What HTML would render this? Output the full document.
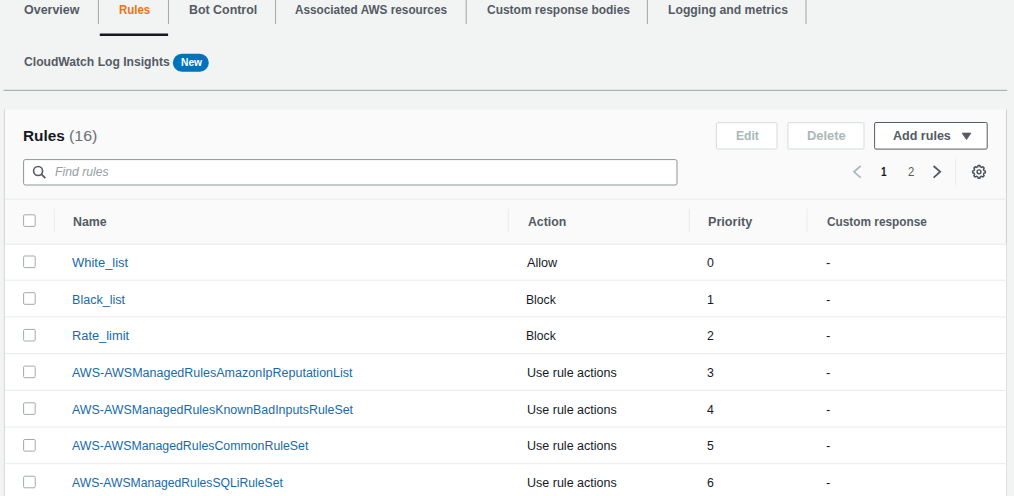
<!DOCTYPE html>
<html>
<head>
<meta charset="utf-8">
<title>Rules</title>
<style>
html,body{margin:0;padding:0;}
body{width:1014px;height:496px;overflow:hidden;background:#f2f3f3;font-family:"Liberation Sans",sans-serif;color:#16191f;position:relative;}
.t{position:absolute;white-space:nowrap;line-height:20px;height:20px;transform-origin:0 50%;}
</style>
</head>
<body>
<svg id="shapes" width="1014" height="496" viewBox="0 0 1014 496" style="position:absolute;left:0;top:0;">
<rect x="97.85" y="0" width="1.1" height="23.9" fill="#a6adad"/>
<rect x="167.95" y="0" width="1.1" height="23.9" fill="#a6adad"/>
<rect x="274.95" y="0" width="1.1" height="23.9" fill="#a6adad"/>
<rect x="465.65" y="0" width="1.1" height="23.9" fill="#a6adad"/>
<rect x="646.85" y="0" width="1.1" height="23.9" fill="#a6adad"/>
<rect x="805.45" y="0" width="1.1" height="23.9" fill="#a6adad"/>
<rect x="99.8" y="33.5" width="68.3" height="2.5" fill="#16191f"/>
<rect x="172.8" y="53.75" width="36" height="18" rx="9" fill="#0073bb"/>
<rect x="3.6" y="89.8" width="1003.6" height="1.1" fill="#a6adad"/>
<rect x="4.4" y="109.5" width="1002.4" height="400" fill="#fafafa"/>
<rect x="3.9" y="109.5" width="1" height="400" fill="#d0d4d4"/>
<rect x="1005.9" y="109.5" width="1.1" height="400" fill="#d0d4d4"/>
<rect x="4.9" y="244.5" width="1001.4" height="260" fill="#ffffff"/>
<rect x="4.9" y="198.75" width="1001.4" height="1" fill="#e9ecec"/>
<rect x="4.9" y="243.70" width="1001.4" height="1" fill="#e9ecec"/>
<rect x="4.9" y="279.70" width="1001.4" height="1" fill="#e9ecec"/>
<rect x="4.9" y="316.40" width="1001.4" height="1" fill="#e9ecec"/>
<rect x="4.9" y="353.10" width="1001.4" height="1" fill="#e9ecec"/>
<rect x="4.9" y="389.80" width="1001.4" height="1" fill="#e9ecec"/>
<rect x="4.9" y="426.50" width="1001.4" height="1" fill="#e9ecec"/>
<rect x="4.9" y="463.20" width="1001.4" height="1" fill="#e9ecec"/>
<rect x="53.75" y="208.75" width="1" height="23.25" fill="#e9ecec"/>
<rect x="507.75" y="208.75" width="1" height="23.25" fill="#e9ecec"/>
<rect x="688.75" y="208.75" width="1" height="23.25" fill="#e9ecec"/>
<rect x="806.50" y="208.75" width="1" height="23.25" fill="#e9ecec"/>
<rect x="23.6" y="214.80" width="11.6" height="11.6" rx="1.2" fill="#fff" stroke="#a3abab" stroke-width="1"/>
<rect x="23.6" y="256.00" width="11.6" height="11.6" rx="1.2" fill="#fff" stroke="#a3abab" stroke-width="1"/>
<rect x="23.6" y="292.70" width="11.6" height="11.6" rx="1.2" fill="#fff" stroke="#a3abab" stroke-width="1"/>
<rect x="23.6" y="329.40" width="11.6" height="11.6" rx="1.2" fill="#fff" stroke="#a3abab" stroke-width="1"/>
<rect x="23.6" y="366.10" width="11.6" height="11.6" rx="1.2" fill="#fff" stroke="#a3abab" stroke-width="1"/>
<rect x="23.6" y="402.80" width="11.6" height="11.6" rx="1.2" fill="#fff" stroke="#a3abab" stroke-width="1"/>
<rect x="23.6" y="439.50" width="11.6" height="11.6" rx="1.2" fill="#fff" stroke="#a3abab" stroke-width="1"/>
<rect x="23.6" y="476.20" width="11.6" height="11.6" rx="1.2" fill="#fff" stroke="#a3abab" stroke-width="1"/>
<rect x="716.4" y="122.7" width="60.6" height="26.3" rx="1.2" fill="#fff" stroke="#d5dbdb"/>
<rect x="787.9" y="122.7" width="76.1" height="26.3" rx="1.2" fill="#fff" stroke="#d5dbdb"/>
<rect x="874.6" y="122.5" width="112.6" height="26.6" rx="1.4" fill="#fff" stroke="#545b64"/>
<path d="M962.1 133.1 L970.9 133.1 L966.5 139.6 Z" fill="#545b64" stroke="#545b64" stroke-width="0.8" stroke-linejoin="round"/>
<rect x="23.6" y="159.6" width="653.4" height="25.4" rx="1.8" fill="#fff" stroke="#8a9697"/>
<circle cx="38.1" cy="170.95" r="4.5" fill="none" stroke="#545b64" stroke-width="1.6"/>
<path d="M41.3 174.2 L45.3 178.1" stroke="#545b64" stroke-width="1.8" stroke-linecap="butt"/>
<path d="M860.6 166 L854 171.8 L860.6 177.6" fill="none" stroke="#aab7b8" stroke-width="1.7"/>
<path d="M933.6 166 L940.2 171.8 L933.6 177.6" fill="none" stroke="#545b64" stroke-width="1.8"/>
<rect x="955.1" y="159" width="1" height="26" fill="#e8ebeb"/>
<path d="M977.79 166.79 L978.05 165.52 L979.95 165.52 L980.21 166.79 L981.72 167.42 L982.81 166.71 L984.14 168.04 L983.43 169.13 L984.06 170.64 L985.33 170.90 L985.33 172.80 L984.06 173.06 L983.43 174.57 L984.14 175.66 L982.81 176.99 L981.72 176.28 L980.21 176.91 L979.95 178.18 L978.05 178.18 L977.79 176.91 L976.28 176.28 L975.19 176.99 L973.86 175.66 L974.57 174.57 L973.94 173.06 L972.67 172.80 L972.67 170.90 L973.94 170.64 L974.57 169.13 L973.86 168.04 L975.19 166.71 L976.28 167.42 Z" fill="none" stroke="#4a5059" stroke-width="1.45" stroke-linejoin="round"/>
<circle cx="979.0" cy="171.85" r="1.95" fill="none" stroke="#4a5059" stroke-width="1.4"/>
</svg>

<!-- texts -->
<div class="t" id="tab1" style="left:24.25px;top:0px;font-size:12.5px;font-weight:bold;font-style:normal;color:#545b64;transform:scaleX(0.9979);">Overview</div>
<div class="t" id="tab2" style="left:118.75px;top:0px;font-size:12.5px;font-weight:bold;font-style:normal;color:#ec7211;transform:scaleX(0.9168);">Rules</div>
<div class="t" id="tab3" style="left:188.75px;top:0px;font-size:12.5px;font-weight:bold;font-style:normal;color:#545b64;transform:scaleX(0.9925);">Bot Control</div>
<div class="t" id="tab4" style="left:295.25px;top:0px;font-size:12.5px;font-weight:bold;font-style:normal;color:#545b64;transform:scaleX(0.9418);">Associated AWS resources</div>
<div class="t" id="tab5" style="left:486.50px;top:0px;font-size:12.5px;font-weight:bold;font-style:normal;color:#545b64;transform:scaleX(0.9573);">Custom response bodies</div>
<div class="t" id="tab6" style="left:668.00px;top:0px;font-size:12.5px;font-weight:bold;font-style:normal;color:#545b64;transform:scaleX(0.9758);">Logging and metrics</div>
<div class="t" id="tab7" style="left:23.75px;top:52px;font-size:12.5px;font-weight:bold;font-style:normal;color:#545b64;transform:scaleX(0.9700);">CloudWatch Log Insights</div>
<div class="t" id="new" style="left:180.60px;top:52px;font-size:11px;font-weight:bold;font-style:normal;color:#ffffff;transform:scaleX(0.9323);">New</div>
<div class="t" id="h2a" style="left:22.76px;top:126px;font-size:15.5px;font-weight:bold;font-style:normal;color:#16191f;transform:scaleX(0.9917);">Rules</div>
<div class="t" id="h2b" style="left:68.75px;top:126px;font-size:15.5px;font-weight:normal;font-style:normal;color:#687078;transform:scaleX(1.0309);">(16)</div>
<div class="t" id="b1t" style="left:735.60px;top:126px;font-size:12.5px;font-weight:bold;font-style:normal;color:#aab7b8;transform:scaleX(0.9695);">Edit</div>
<div class="t" id="b2t" style="left:807.00px;top:126px;font-size:12.5px;font-weight:bold;font-style:normal;color:#aab7b8;transform:scaleX(1.0315);">Delete</div>
<div class="t" id="b3t" style="left:893.10px;top:126px;font-size:12.5px;font-weight:bold;font-style:normal;color:#545b64;transform:scaleX(1.0035);">Add rules</div>
<div class="t" id="ph" style="left:55.00px;top:162px;font-size:12.5px;font-weight:normal;font-style:italic;color:#95a1a2;transform:scaleX(0.9774);">Find rules</div>
<div class="t" id="p1" style="left:880.55px;top:162px;font-size:12.5px;font-weight:bold;font-style:normal;color:#16191f;transform:scaleX(0.8000);">1</div>
<div class="t" id="p2" style="left:907.50px;top:162px;font-size:12.5px;font-weight:normal;font-style:normal;color:#545b64;transform:scaleX(0.9000);">2</div>
<div class="t" id="th1" style="left:73.25px;top:212px;font-size:12.5px;font-weight:bold;font-style:normal;color:#545b64;transform:scaleX(0.9899);">Name</div>
<div class="t" id="th2" style="left:527.50px;top:212px;font-size:12.5px;font-weight:bold;font-style:normal;color:#545b64;transform:scaleX(0.9804);">Action</div>
<div class="t" id="th3" style="left:708.25px;top:212px;font-size:12.5px;font-weight:bold;font-style:normal;color:#545b64;transform:scaleX(1.0100);">Priority</div>
<div class="t" id="th4" style="left:826.75px;top:212px;font-size:12.5px;font-weight:bold;font-style:normal;color:#545b64;transform:scaleX(0.9467);">Custom response</div>
<div class="t" id="r0n" style="left:72.00px;top:253px;font-size:12.5px;font-weight:normal;font-style:normal;color:#176aa8;transform:scaleX(1.0373);">White_list</div>
<div class="t" id="r0a" style="left:526.75px;top:253px;font-size:12.5px;font-weight:normal;font-style:normal;color:#16191f;transform:scaleX(1.0132);">Allow</div>
<div class="t" id="r0p" style="left:707.00px;top:253px;font-size:12.5px;font-weight:normal;font-style:normal;color:#16191f;transform:scaleX(0.9857);">0</div>
<div class="t" id="r0d" style="left:825.77px;top:253px;font-size:12.5px;font-weight:normal;font-style:normal;color:#16191f;transform:scaleX(1.0500);">-</div>
<div class="t" id="r1n" style="left:71.89px;top:290px;font-size:12.5px;font-weight:normal;font-style:normal;color:#176aa8;transform:scaleX(1.0053);">Black_list</div>
<div class="t" id="r1a" style="left:525.78px;top:290px;font-size:12.5px;font-weight:normal;font-style:normal;color:#16191f;transform:scaleX(0.9731);">Block</div>
<div class="t" id="r1p" style="left:707.00px;top:290px;font-size:12.5px;font-weight:normal;font-style:normal;color:#16191f;transform:scaleX(0.9857);">1</div>
<div class="t" id="r1d" style="left:825.77px;top:290px;font-size:12.5px;font-weight:normal;font-style:normal;color:#16191f;transform:scaleX(1.0500);">-</div>
<div class="t" id="r2n" style="left:71.87px;top:326px;font-size:12.5px;font-weight:normal;font-style:normal;color:#176aa8;transform:scaleX(1.0272);">Rate_limit</div>
<div class="t" id="r2a" style="left:525.78px;top:326px;font-size:12.5px;font-weight:normal;font-style:normal;color:#16191f;transform:scaleX(0.9731);">Block</div>
<div class="t" id="r2p" style="left:707.00px;top:326px;font-size:12.5px;font-weight:normal;font-style:normal;color:#16191f;transform:scaleX(0.9857);">2</div>
<div class="t" id="r2d" style="left:825.77px;top:326px;font-size:12.5px;font-weight:normal;font-style:normal;color:#16191f;transform:scaleX(1.0500);">-</div>
<div class="t" id="r3n" style="left:72.00px;top:363px;font-size:12.5px;font-weight:normal;font-style:normal;color:#176aa8;transform:scaleX(1.0001);">AWS-AWSManagedRulesAmazonIpReputationList</div>
<div class="t" id="r3a" style="left:526.75px;top:363px;font-size:12.5px;font-weight:normal;font-style:normal;color:#16191f;transform:scaleX(1.0009);">Use rule actions</div>
<div class="t" id="r3p" style="left:707.00px;top:363px;font-size:12.5px;font-weight:normal;font-style:normal;color:#16191f;transform:scaleX(0.9857);">3</div>
<div class="t" id="r3d" style="left:825.77px;top:363px;font-size:12.5px;font-weight:normal;font-style:normal;color:#16191f;transform:scaleX(1.0500);">-</div>
<div class="t" id="r4n" style="left:72.00px;top:400px;font-size:12.5px;font-weight:normal;font-style:normal;color:#176aa8;transform:scaleX(0.9923);">AWS-AWSManagedRulesKnownBadInputsRuleSet</div>
<div class="t" id="r4a" style="left:526.75px;top:400px;font-size:12.5px;font-weight:normal;font-style:normal;color:#16191f;transform:scaleX(1.0009);">Use rule actions</div>
<div class="t" id="r4p" style="left:707.00px;top:400px;font-size:12.5px;font-weight:normal;font-style:normal;color:#16191f;transform:scaleX(0.9857);">4</div>
<div class="t" id="r4d" style="left:825.77px;top:400px;font-size:12.5px;font-weight:normal;font-style:normal;color:#16191f;transform:scaleX(1.0500);">-</div>
<div class="t" id="r5n" style="left:72.00px;top:436px;font-size:12.5px;font-weight:normal;font-style:normal;color:#176aa8;transform:scaleX(0.9872);">AWS-AWSManagedRulesCommonRuleSet</div>
<div class="t" id="r5a" style="left:526.75px;top:436px;font-size:12.5px;font-weight:normal;font-style:normal;color:#16191f;transform:scaleX(1.0009);">Use rule actions</div>
<div class="t" id="r5p" style="left:707.00px;top:436px;font-size:12.5px;font-weight:normal;font-style:normal;color:#16191f;transform:scaleX(0.9857);">5</div>
<div class="t" id="r5d" style="left:825.77px;top:436px;font-size:12.5px;font-weight:normal;font-style:normal;color:#16191f;transform:scaleX(1.0500);">-</div>
<div class="t" id="r6n" style="left:72.00px;top:473px;font-size:12.5px;font-weight:normal;font-style:normal;color:#176aa8;transform:scaleX(0.9735);">AWS-AWSManagedRulesSQLiRuleSet</div>
<div class="t" id="r6a" style="left:526.75px;top:473px;font-size:12.5px;font-weight:normal;font-style:normal;color:#16191f;transform:scaleX(1.0009);">Use rule actions</div>
<div class="t" id="r6p" style="left:707.00px;top:473px;font-size:12.5px;font-weight:normal;font-style:normal;color:#16191f;transform:scaleX(0.9857);">6</div>
<div class="t" id="r6d" style="left:825.77px;top:473px;font-size:12.5px;font-weight:normal;font-style:normal;color:#16191f;transform:scaleX(1.0500);">-</div>
</body>
</html>
